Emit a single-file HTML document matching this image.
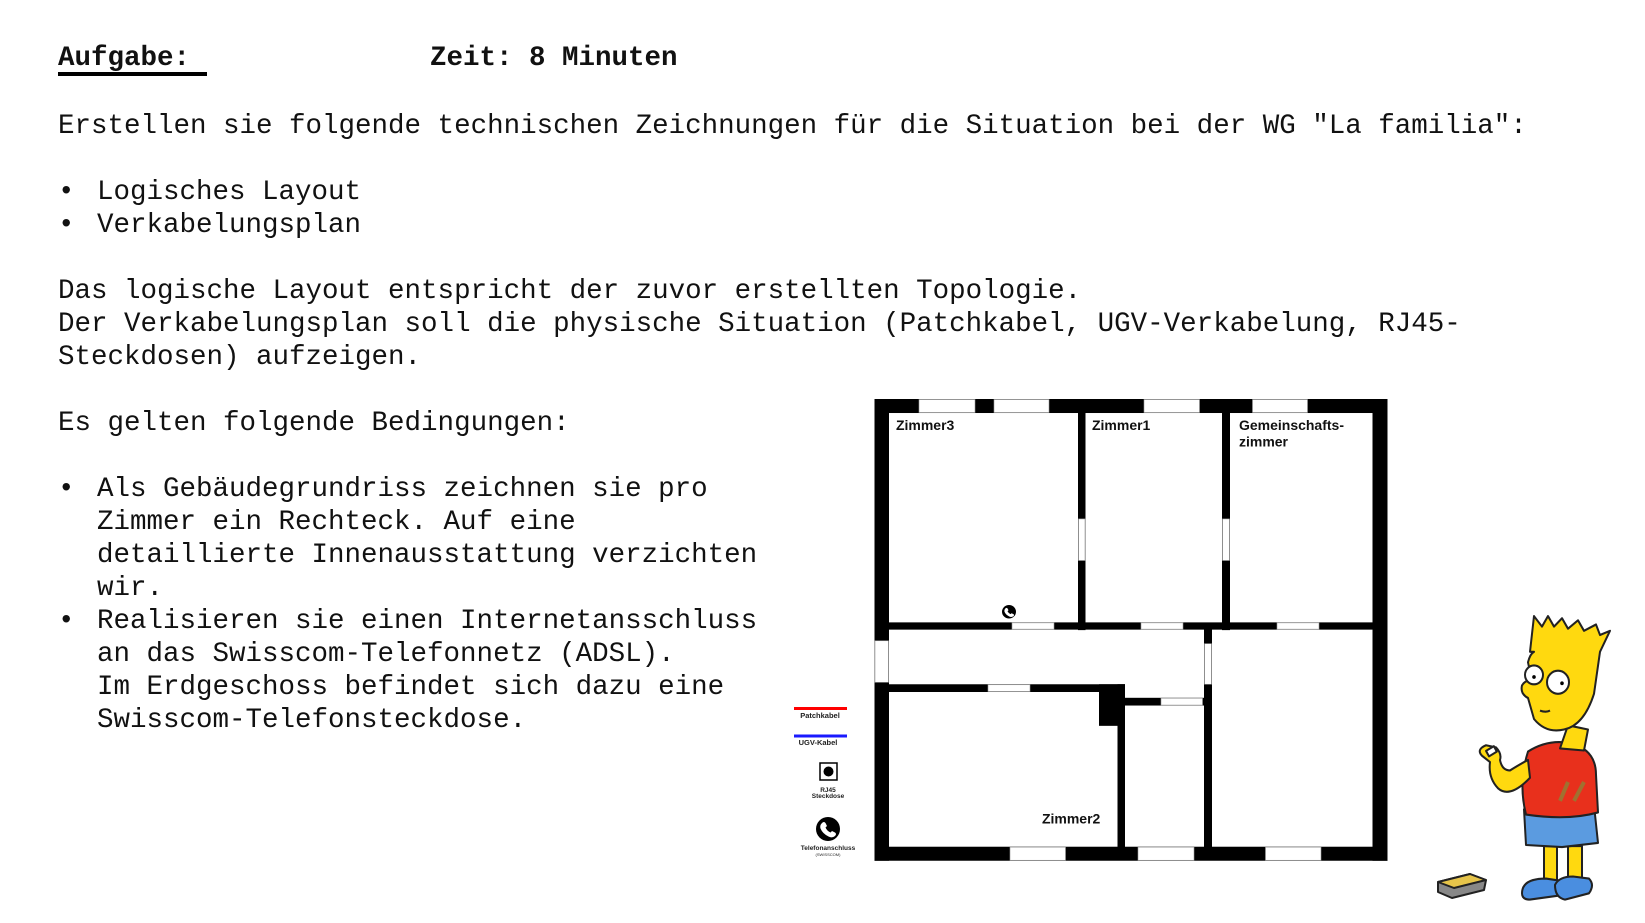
<!DOCTYPE html>
<html><head><meta charset="utf-8"><style>
html,body{margin:0;padding:0;background:#fff;width:1645px;height:923px;overflow:hidden;position:relative}
.t{position:absolute;font-family:"Liberation Mono",monospace;font-size:27.5px;line-height:33px;white-space:pre;color:#111}
.b{font-weight:bold}
svg{position:absolute;left:0;top:0}
</style></head><body>
<div class="t b" style="left:58px;top:42px">Aufgabe:</div>
<div style="position:absolute;left:58px;top:72px;width:149px;height:4px;background:#000"></div>
<div class="t b" style="left:430px;top:42px">Zeit: 8 Minuten</div>
<div class="t" style="left:58px;top:110px">Erstellen sie folgende technischen Zeichnungen für die Situation bei der WG "La familia":</div>
<div class="t" style="left:58px;top:176px">•</div><div class="t" style="left:97px;top:176px">Logisches Layout</div>
<div class="t" style="left:58px;top:209px">•</div><div class="t" style="left:97px;top:209px">Verkabelungsplan</div>
<div class="t" style="left:58px;top:275px">Das logische Layout entspricht der zuvor erstellten Topologie.</div>
<div class="t" style="left:58px;top:308px">Der Verkabelungsplan soll die physische Situation (Patchkabel, UGV-Verkabelung, RJ45-</div>
<div class="t" style="left:58px;top:341px">Steckdosen) aufzeigen.</div>
<div class="t" style="left:58px;top:407px">Es gelten folgende Bedingungen:</div>
<div class="t" style="left:58px;top:473px">•</div><div class="t" style="left:97px;top:473px">Als Gebäudegrundriss zeichnen sie pro</div>
<div class="t" style="left:97px;top:506px">Zimmer ein Rechteck. Auf eine</div>
<div class="t" style="left:97px;top:539px">detaillierte Innenausstattung verzichten</div>
<div class="t" style="left:97px;top:572px">wir.</div>
<div class="t" style="left:58px;top:605px">•</div><div class="t" style="left:97px;top:605px">Realisieren sie einen Internetansschluss</div>
<div class="t" style="left:97px;top:638px">an das Swisscom-Telefonnetz (ADSL).</div>
<div class="t" style="left:97px;top:671px">Im Erdgeschoss befindet sich dazu eine</div>
<div class="t" style="left:97px;top:704px">Swisscom-Telefonsteckdose.</div>

<svg width="1645" height="923" viewBox="0 0 1645 923" font-family="Liberation Sans, sans-serif">
<g transform="translate(0,399) scale(1,0.967) translate(0,-399)">
<g fill="#000">
<rect x="874.5" y="399" width="513" height="14.5"/>
<rect x="874.5" y="862" width="513" height="14.5"/>
<rect x="874.5" y="399" width="14.5" height="477.5"/>
<rect x="1372.5" y="399" width="15" height="477.5"/>
<rect x="1078" y="413" width="7.5" height="225"/>
<rect x="1222" y="413" width="8" height="225"/>
<rect x="889" y="630" width="484" height="7.5"/>
<rect x="889" y="694" width="236" height="8"/>
<rect x="1099" y="694" width="26" height="43"/>
<rect x="1117.5" y="694" width="7.5" height="170"/>
<rect x="1125" y="708" width="80" height="8"/>
<rect x="1204" y="637" width="8" height="226"/>
</g>
<g fill="#fff" stroke="#999" stroke-width="0.6">
<rect x="919" y="399.5" width="56" height="13.5"/>
<rect x="994" y="399.5" width="55" height="13.5"/>
<rect x="1144" y="399.5" width="55.5" height="13.5"/>
<rect x="1252.5" y="399.5" width="55" height="13.5"/>
<rect x="1010" y="862.5" width="55.5" height="13.5"/>
<rect x="1138" y="862.5" width="56" height="13.5"/>
<rect x="1265.5" y="862.5" width="55.5" height="13.5"/>
<rect x="875" y="649" width="13.5" height="43"/>
<rect x="1078.5" y="523" width="6.5" height="43"/>
<rect x="1222.5" y="523" width="7" height="43"/>
<rect x="1012" y="630.5" width="42" height="6.5"/>
<rect x="1141" y="630.5" width="42" height="6.5"/>
<rect x="1277" y="630.5" width="42" height="6.5"/>
<rect x="988" y="694.5" width="42" height="7"/>
<rect x="1161" y="708.5" width="41.5" height="7"/>
<rect x="1204.5" y="652" width="7" height="42"/>
</g>
<g font-size="14" font-weight="bold" fill="#111">
<text x="896" y="431">Zimmer3</text>
<text x="1092" y="431">Zimmer1</text>
<text x="1239" y="431">Gemeinschafts-</text>
<text x="1239" y="448">zimmer</text>
<text x="1042" y="838">Zimmer2</text>
</g>
<circle cx="1009" cy="619" r="7" fill="#000"/>
<path d="M1005.5 615.5 q1 -1 2 0 l1 2 l-1 1 q1 2 3 3 l1 -1 l2 1 q1 1 0 2 q-2 1.5 -4 0.5 q-4 -2 -5 -5 q-0.5 -2 1 -3.5z" fill="#fff"/>
</g>
<rect x="794" y="707" width="53" height="3" fill="#f00"/>
<text x="820" y="718" font-size="7.5" font-weight="bold" text-anchor="middle" fill="#222">Patchkabel</text>
<rect x="794" y="734.5" width="53" height="3" fill="#1a1aff"/>
<text x="818" y="745" font-size="7.5" font-weight="bold" text-anchor="middle" fill="#222">UGV-Kabel</text>
<rect x="820" y="763" width="17" height="17" fill="#fff" stroke="#000" stroke-width="1.5"/>
<circle cx="828.5" cy="771.5" r="5" fill="#000"/>
<text x="828" y="792" font-size="6.5" font-weight="bold" text-anchor="middle" fill="#222">RJ45</text>
<text x="828" y="798" font-size="6.5" font-weight="bold" text-anchor="middle" fill="#222">Steckdose</text>
<circle cx="828" cy="829" r="12" fill="#000"/>
<path d="M822 823 q2 -2 3.5 0 l1.5 3 l-1.5 1.5 q1.5 3.5 5 5 l1.5 -1.5 l3 1.5 q2 1.5 0 3.5 q-3 2.5 -6.5 0.5 q-6 -3 -8 -8 q-1 -3 1.5 -5.5z" fill="#fff"/>
<text x="828" y="850" font-size="6.5" font-weight="bold" text-anchor="middle" fill="#222">Telefonanschluss</text>
<text x="828" y="856" font-size="4" text-anchor="middle" fill="#222">(SWISSCOM)</text>
<g stroke="#222" stroke-width="2" stroke-linejoin="round">
<g transform="translate(0,14)">
<path d="M1438 868 l32 -8 l16 6 l-2 10 l-32 8 l-14 -6z" fill="#888"/>
<path d="M1438 868 l32 -8 l16 6 l-32 8z" fill="#e6c44a"/>
</g>
<g transform="translate(0,614) scale(1,1.05) translate(0,-614)">
<rect x="1544" y="835" width="13" height="33" fill="#ffd90f"/>
<rect x="1568" y="835" width="14" height="33" fill="#ffd90f"/>
<path d="M1522 880 q0 -14 24 -14 l14 2 l0 14 l-30 4 q-8 0 -8 -6z" fill="#4a8ee0"/>
<path d="M1555 872 q4 -8 18 -8 l16 2 q6 6 0 14 l-24 6 q-10 -2 -10 -14z" fill="#4a8ee0"/>
<path d="M1524 800 l70 -4 l4 36 l-36 4 l-36 -2z" fill="#5b9be0"/>
<path d="M1528 745 q20 -12 42 -8 q26 6 26 30 l2 36 q-30 8 -72 2 q-8 -30 2 -60z" fill="#e8301c"/>
<path d="M1530 770 q-20 20 -32 10 q-10 -10 -8 -25 l-8 -6 q-6 -6 4 -10 l10 2 q6 6 4 12 q2 10 10 10 q10 -6 18 -10z" fill="#ffd90f"/>
<rect x="1487" y="742" width="9" height="6" fill="#fff" transform="rotate(-30 1491 745)"/>
<path d="M1560 792 l8 -18 m6 18 l10 -18" stroke="#a07030" stroke-width="4" fill="none"/>
<path d="M1560 742 l8 -22 l20 4 l-4 20z" fill="#ffd90f"/>
<path d="M1530 650 l4 -34 l8 10 l6 -10 l6 10 l8 -8 l6 10 l10 -8 l6 10 l12 -6 l4 10 l10 -4 l-10 20 l-6 40 q-10 30 -30 34 q-18 4 -30 -10 l-6 -20 q-8 -4 -6 -12 q4 -6 10 -4 l-4 -18 q2 -8 6 -10z" fill="#ffd90f"/>
<circle cx="1534" cy="672" r="9" fill="#fff"/>
<circle cx="1558" cy="679" r="11" fill="#fff"/>
<circle cx="1534" cy="674" r="1.8" fill="#000" stroke="none"/>
<circle cx="1562" cy="680" r="1.8" fill="#000" stroke="none"/>
<path d="M1540 706 q6 2 10 0" fill="none"/>
</g>
</g>
</svg>
</body></html>
